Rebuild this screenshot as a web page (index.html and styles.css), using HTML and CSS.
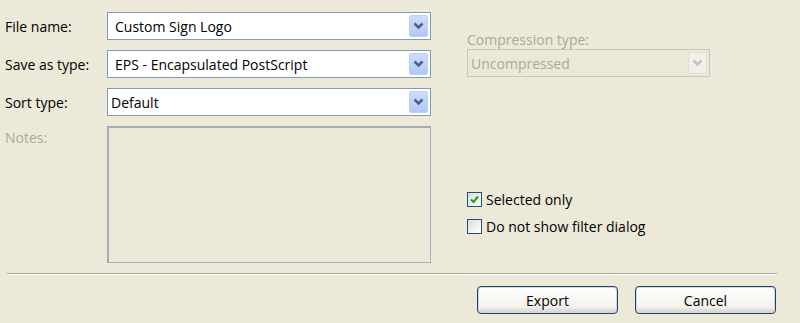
FILE: index.html
```html
<!DOCTYPE html>
<html lang="en">

<head>
    <meta charset="UTF-8">
    <title>Export</title>
    <link rel="stylesheet" href="styles.css">
</head>

<body>
    <div class="dialog">
        <div class="main">
            <!-- Left: file fields -->
            <div class="fields">
                <label class="label">File name:</label>
                <div class="combo editable">
                    <span class="value">Custom Sign Logo</span>
                    <span class="drop"><svg width="11" height="8" viewBox="0 0 11 8"><path d="M1.5 1.5 L5.5 5.5 L9.5 1.5" fill="none" stroke="#4d6185" stroke-width="2.5"/></svg></span>
                </div>

                <label class="label">Save as type:</label>
                <div class="combo editable">
                    <span class="value">EPS - Encapsulated PostScript</span>
                    <span class="drop"><svg width="11" height="8" viewBox="0 0 11 8"><path d="M1.5 1.5 L5.5 5.5 L9.5 1.5" fill="none" stroke="#4d6185" stroke-width="2.5"/></svg></span>
                </div>

                <label class="label">Sort type:</label>
                <div class="combo">
                    <span class="value">Default</span>
                    <span class="drop"><svg width="11" height="8" viewBox="0 0 11 8"><path d="M1.5 1.5 L5.5 5.5 L9.5 1.5" fill="none" stroke="#4d6185" stroke-width="2.5"/></svg></span>
                </div>

                <label class="label disabled notes-label">Notes:</label>
                <div class="notes"></div>
            </div>

            <!-- Right: options -->
            <div class="options">
                <div class="compression">
                    <label class="label disabled">Compression type:</label>
                    <div class="combo off">
                        <span class="value">Uncompressed</span>
                        <span class="drop"><svg width="11" height="8" viewBox="0 0 11 8"><path d="M1.5 1.5 L5.5 5.5 L9.5 1.5" fill="none" stroke="#c5c3b8" stroke-width="2.5"/></svg></span>
                    </div>
                </div>

                <div class="checks">
                    <div class="check">
                        <span class="box"><svg width="9" height="9" viewBox="0 0 9 9"><path d="M1 4.5 L3.5 7 L8 1.5" fill="none" stroke="#21a121" stroke-width="2"/></svg></span>
                        <span>Selected only</span>
                    </div>
                    <div class="check">
                        <span class="box"></span>
                        <span>Do not show filter dialog</span>
                    </div>
                </div>
            </div>
        </div>

        <div class="separator"></div>

        <div class="buttons">
            <button type="button">Export</button>
            <button type="button">Cancel</button>
        </div>
    </div>
</body>

</html>
```

FILE: styles.css
```css
* {
    margin: 0;
    padding: 0;
    box-sizing: border-box;
}

body {
    font-family: "Open Sans", "Liberation Sans", sans-serif;
    font-size: 14px;
    background-color: #ece9d8;
    color: #000;
    width: 800px;
    height: 323px;
    overflow: hidden;
}

.dialog {
    padding-top: 12px;
}

.main {
    display: flex;
    height: 261px;
}

.fields {
    display: grid;
    grid-template-columns: 107px 324px;
    grid-template-rows: 28px 28px 28px 137px;
    row-gap: 10px;
    width: 467px;
}

.label {
    padding-left: 5px;
    display: flex;
    align-items: center;
}

.label.disabled {
    color: #aca899;
}

.notes-label {
    align-items: flex-start;
    padding-top: 2px;
}

.combo {
    display: flex;
    align-items: center;
    justify-content: space-between;
    background: #fff;
    border: 1px solid #7f9db9;
    padding: 2px;
    padding-left: 3px;
}

.combo.editable {
    padding-left: 7px;
}

.drop {
    width: 19px;
    height: 22px;
    display: flex;
    align-items: center;
    justify-content: center;
    background: linear-gradient(#cddcfc, #b1c8f6);
    border: 1px solid #bccff8;
    border-radius: 2px;
}

.combo.off {
    background: #ebe8d8;
    border-color: #c9c7ba;
    color: #aca899;
}

.combo.off .drop {
    background: #f0efe9;
    border-color: #e2e0d6;
}

.notes {
    border: 2px solid #a2adb8;
    background: #ebe8d8;
    border-width: 2px 1px 1px 2px;
}

.options {
    width: 243px;
    display: flex;
    flex-direction: column;
}

.compression {
    padding-top: 17px;
}

.compression .label {
    padding-left: 0;
    height: 20px;
}

.checks {
    margin-top: 114px;
    display: flex;
    flex-direction: column;
    gap: 10px;
}

.check {
    display: flex;
    align-items: center;
    gap: 4px;
    height: 17px;
}

.box {
    width: 15px;
    height: 15px;
    border: 1px solid #1c5180;
    background: linear-gradient(135deg, #dcdcd6, #fff);
    display: flex;
    align-items: center;
    justify-content: center;
}

.separator {
    margin-left: 7px;
    width: 770px;
    border-top: 1px solid #aca899;
    border-bottom: 1px solid #fff;
}

.buttons {
    display: flex;
    justify-content: flex-end;
    gap: 17px;
    padding-top: 11px;
    padding-right: 24px;
}

button {
    width: 141px;
    height: 28px;
    font-family: inherit;
    font-size: 14px;
    color: #000;
    border: 1px solid #2a3f5c;
    border-radius: 4px;
    background: linear-gradient(#ffffff, #f3f2ec 75%, #d6d0c5);
    box-shadow: inset 0 0 0 1px #c8d6ee;
}
```
